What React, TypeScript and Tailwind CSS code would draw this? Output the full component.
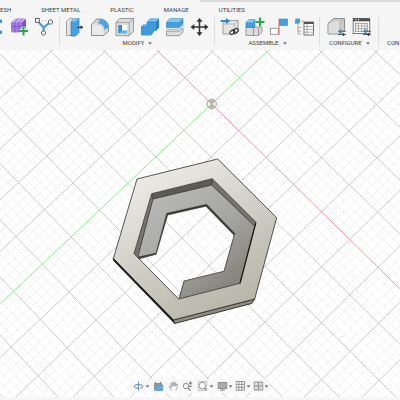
import * as React from "react";
import { clsx } from "clsx";

type IconProps = { className?: string };

type Tool = {
  label: string;
  icon: React.ReactNode;
};

type ToolGroup = {
  name: string;
  title?: string;
  className: string;
  tools: Tool[];
};

const TABS = ["ESH", "SHEET METAL", "PLASTIC", "MANAGE", "UTILITIES"];

function ToolIcon({ children }: { children: React.ReactNode }) {
  return (
    <svg viewBox="0 0 20 20" className="size-5" fill="none" aria-hidden>
      {children}
    </svg>
  );
}

function Caret({ className }: IconProps) {
  return (
    <svg viewBox="0 0 4 3" className={clsx("h-[3px] w-1 shrink-0", className)} aria-hidden>
      <path d="M0 0.3h4L2 2.7z" fill="#777" />
    </svg>
  );
}

const GROUPS: ToolGroup[] = [
  {
    name: "Create",
    className: "-ml-4 pr-[5px]",
    tools: [
      {
        label: "Pattern",
        icon: (
          <ToolIcon>
            <path d="M12 2.500h6V6h-5zM12 13.500h6V17h-6z" fill="#3f9ad8" />
          </ToolIcon>
        ),
      },
      {
        label: "Create form",
        icon: (
          <ToolIcon>
            <path d="M2 6q0-1 1-1.6L6 2q1-.6 2-.6h7q2 0 2 2v7q0 1-1 2l-2 2q-1 1-2 1H4q-2 0-2-2z" fill="#a47be2" />
            <path d="M2.5 5.2 6 2h10l-3 3.4z" fill="#c9adf4" />
            <path d="M13.3 5.5 17 2.4v8l-3.7 4z" fill="#7f54c4" />
            <path d="M2 9.5h11.3L17 6M6 5.3V15M9.8 5.3V15M13.3 5.4V15M6 5l3-3M10 5l3-3" stroke="#7850ba" strokeWidth="0.7" />
            <path d="M14.5 9.5v9M10 14h9" stroke="#f5f5f6" strokeWidth="3.6" />
            <path d="M14.5 9.5v9M10 14h9" stroke="#29a84a" strokeWidth="2" />
          </ToolIcon>
        ),
      },
      {
        label: "Derive",
        icon: (
          <ToolIcon>
            <path d="M4 4.5 9.5 10.5 16.5 5M9.5 10.5v5" stroke="#489dd7" strokeWidth="2.2" />
            <path d="M5 3.800h9" stroke="#999" strokeWidth="0.7" strokeDasharray="1 2" />
            <rect x="1.5" y="1.500" width="3.8" height="3.8" fill="#fff" stroke="#666" />
            <circle cx="16.5" cy="5" r="2.2" fill="#fff" stroke="#666" />
            <circle cx="9.5" cy="16" r="2.100" fill="#fff" stroke="#666" />
          </ToolIcon>
        ),
      },
    ],
  },
  {
    name: "Modify",
    title: "MODIFY",
    className: "pr-1 pl-[5px]",
    tools: [
      {
        label: "Press pull",
        icon: (
          <ToolIcon>
            <path d="M1.5 4.5 4.5 1.5H8v17H1.5z" fill="#e4e4e4" stroke="#8a8a8a" strokeWidth="0.8" />
            <path d="M6 4.5 9.5 1.5h4.5v14L10.5 19H6z" fill="#4a9fdb" stroke="#2f83c0" strokeWidth="0.7" />
            <path d="M6 4.5 9.5 1.5H14l-3.5 3z" fill="#8fc8f0" />
            <path d="M12.5 10.3h4" stroke="#333" strokeWidth="1.2" />
            <path d="m15.5 8.300 3 2-3 2z" fill="#333" />
          </ToolIcon>
        ),
      },
      {
        label: "Fillet",
        icon: (
          <ToolIcon>
            <path d="M1.5 7.5 6.5 2h3.5c5 0 8.5 4 8.5 8v4l-4.5 4.5H1.5z" fill="#d6d6d6" stroke="#777" strokeWidth="0.8" />
            <path d="M2 7.8h4c4.5 0 7.5 3 7.5 7V18H2z" fill="#ececec" />
            <path d="M8 6.500 10 2c5 0 8.5 3.5 8.5 8.500l-4 2.500c0-4-2.500-6.500-6.500-6.500z" fill="#4fa3dd" />
          </ToolIcon>
        ),
      },
      {
        label: "Shell",
        icon: (
          <ToolIcon>
            <path d="M1 5.5 4.8 1.5h13.7v13l-4.2 4.2H1z" fill="#dcdcdc" stroke="#888" strokeWidth="0.8" />
            <path d="M1 5.5h13.3v13.2M14.3 5.5l4.2-4" stroke="#999" strokeWidth="0.8" />
            <path d="M3.500 8h8.500v8.500H3.500z" fill="#6ab2e4" />
            <path d="M3.500 8H7v5.300l-3.500 3.200z" fill="#2f8bcd" />
            <path d="M7 8h5v5.300H7z" fill="#fff" />
          </ToolIcon>
        ),
      },
      {
        label: "Combine",
        icon: (
          <ToolIcon>
            <path d="M7 5 10 1.5h9v9L15.5 14H14v1l-3 3.5H1v-9L4 7h3z" fill="#4099d9" />
            <path d="M7 5 10 1.5h9L16 5zM1 9.5 4 7h3v2.5z" fill="#7cbdec" />
            <path d="M16 5 19 1.5v9L16 14z" fill="#2a81c4" />
            <path d="M1 9.5h6V5h9" stroke="#2c84c6" strokeWidth="0.6" />
          </ToolIcon>
        ),
      },
      {
        label: "Split body",
        icon: (
          <ToolIcon>
            <path d="M1.5 5 5 1.5h13v5.5l-4 3.5H1.5z" fill="#479dda" stroke="#2f83c0" strokeWidth="0.6" />
            <path d="M1.5 5 5 1.5h13L14 5z" fill="#8ac5ee" />
            <path d="M1 12.3h13l5-4.300" stroke="#6cb0e0" strokeWidth="0.900" />
            <path d="M1.5 14.2H14l4-3.2v4l-3.5 3.7h-13z" fill="#dcdcdc" stroke="#888" strokeWidth="0.8" />
          </ToolIcon>
        ),
      },
      {
        label: "Move",
        icon: (
          <ToolIcon>
            <path d="M9.500 3v14M2.500 10h14" stroke="#333" strokeWidth="1.500" />
            <path d="m9.500 1 3 3.800h-6zM9.500 19l3-3.800h-6zM.5 10l3.800-3v6zM18.500 10l-3.800-3v6z" fill="#333" />
          </ToolIcon>
        ),
      },
    ],
  },
  {
    name: "Assemble",
    title: "ASSEMBLE",
    className: "pr-1 pl-[5px]",
    tools: [
      {
        label: "Insert component",
        icon: (
          <ToolIcon>
            <path d="M3 6.5 6 3.5h12v11l-2 2.5H3z" fill="#e6e6e6" stroke="#888" strokeWidth="0.8" />
            <path d="M14.5 7V16M3 7h11.5L18 3.5" stroke="#aaa" strokeWidth="0.7" />
            <path d="M.7 4h6" stroke="#2788ce" strokeWidth="2" />
            <path d="m6 1 4.2 3L6 7z" fill="#2788ce" />
            <rect x="9.5" y="13.500" width="5.4" height="3.6" rx="1.8" transform="rotate(-35 12 15)" fill="#f5f5f6" stroke="#333" strokeWidth="1.2" />
            <rect x="13.3" y="12" width="5.4" height="3.6" rx="1.8" transform="rotate(-35 16 14)" stroke="#333" strokeWidth="1.2" />
          </ToolIcon>
        ),
      },
      {
        label: "New component",
        icon: (
          <ToolIcon>
            <path d="M1 10h16v5l-3.500 3.500H1z" fill="#dcdcdc" stroke="#888" strokeWidth="0.8" />
            <path d="M1 5.500 4 2.500h6v8H1z" fill="#479dda" stroke="#2980c0" strokeWidth="0.6" />
            <path d="M1 5.500 4 2.500h6l-2 3z" fill="#8bc5ef" />
            <path d="M8.5 10.5v8M13.5 11v7" stroke="#888" strokeWidth="0.8" />
            <path d="M15 .5v9M10.5 5h9" stroke="#f5f5f6" strokeWidth="3.600" />
            <path d="M15 .5v9M10.5 5h9" stroke="#29a84a" strokeWidth="2" />
          </ToolIcon>
        ),
      },
      {
        label: "Joint",
        icon: (
          <ToolIcon>
            <rect x=".5" y="11.3" width="8" height="6" fill="#fff" stroke="#888" strokeWidth="0.8" />
            <rect x="9.500" y="2" width="8" height="6.500" fill="#4a9fdb" stroke="#3487c4" strokeWidth="0.6" />
            <path d="M9 2v16" stroke="#e0605c" strokeWidth="1" />
          </ToolIcon>
        ),
      },
      {
        label: "Bill of materials",
        icon: (
          <ToolIcon>
            <path d="M0 2.500 1 1.500h4v4L4 6.700H0z" fill="#4a9fdb" />
            <path d="M3 7v10h3M3 10.5h3M3 14h3M6 4h3" stroke="#888" strokeWidth="0.7" />
            <rect x="9" y="5" width="9.5" height="13" fill="#fff" stroke="#666" strokeWidth="0.9" />
            <path d="M9 6h9.5" stroke="#555" strokeWidth="2" />
            <path d="M9 9.5h9.500M9 12.3h9.500M9 15.2h9.500M12 7v11" stroke="#999" strokeWidth="0.8" />
          </ToolIcon>
        ),
      },
    ],
  },
  {
    name: "Configure",
    title: "CONFIGURE",
    className: "pr-1.5 pl-[7px]",
    tools: [
      {
        label: "Configure model",
        icon: (
          <ToolIcon>
            <path d="M1 6.5 6.500 1.500h11V13l-4 4H1z" fill="#c9c9c9" stroke="#777" strokeWidth="0.8" />
            <path d="M1.500 7 5.500 4.500H13v12H1.500z" fill="#dedede" />
            <path d="M13 5V17M13 5l4.500-3.500" stroke="#aaa" strokeWidth="0.7" />
            <path d="M11 14.300h8M11 17.500h8" stroke="#555" />
            <path d="M13.500 12.300v4" stroke="#2f8fd3" strokeWidth="2" />
            <path d="M16.500 16v3" stroke="#444" strokeWidth="1.4" />
          </ToolIcon>
        ),
      },
      {
        label: "Configuration table",
        icon: (
          <ToolIcon>
            <rect x="1.2" y="1.5" width="16.5" height="15" fill="#fff" stroke="#666" strokeWidth="0.9" />
            <path d="M1 2.800h17" stroke="#505050" strokeWidth="3" />
            <path d="M3.5 2.7h1.2M6 2.7h1.2" stroke="#fff" />
            <rect x="3.3" y="6.3" width="12" height="8" stroke="#888" strokeWidth="0.8" />
            <path d="M3 9h12.5M3 11.7h12.5M6.5 6v8.5M9.7 6v8.5M12.7 6v8.5" stroke="#999" strokeWidth="0.8" />
            <path d="M11 14.300h8M11 17.500h8" stroke="#555" />
            <path d="M13.500 12.300v4" stroke="#2f8fd3" strokeWidth="2" />
            <path d="M16.500 16v3" stroke="#444" strokeWidth="1.4" />
          </ToolIcon>
        ),
      },
    ],
  },
];

function NavIcon({ children }: { children: React.ReactNode }) {
  return (
    <svg viewBox="0 0 10 10" className="size-[10px]" fill="none" stroke="#888" strokeWidth="0.9" aria-hidden>
      {children}
    </svg>
  );
}

const NAV_TOOLS: (Tool & { menu?: boolean; className: string })[] = [
  {
    label: "Orbit",
    menu: true,
    className: "mr-1 gap-[2px]",
    icon: (
      <NavIcon>
        <path d="M3.5 7.2C-.8 6.5-.3 3.6 5 3.6s5.800 2.900 1.500 3.600" stroke="#666" />
        <path d="m5.500 5.600-2 1.600 2 1.500z" fill="#555" stroke="none" />
        <path d="M5 .3v9.400" stroke="#4f9fd8" />
      </NavIcon>
    ),
  },
  {
    label: "Look at",
    className: "mr-[5px]",
    icon: (
      <NavIcon>
        <path d="M.8 2.500h7.400v6.700H.8z" fill="#999" />
        <path d="M2.800 4.300h6.400v5H2.800z" fill="#62ace2" stroke="#5c98c4" />
        <path d="M2 2V.8M7 2V.8" stroke="#777" />
      </NavIcon>
    ),
  },
  {
    label: "Pan",
    className: "mr-1",
    icon: (
      <NavIcon>
        <path
          d="M3.200 9.500.7 5.700q.7-.8 1.500.2l.8.700-.9-4.200q.7-.6 1.100.3l.9 2.500L4 1.200q.7-.7 1.100.1l.3 3.600.9-3.300q.8-.5 1 .4l-.5 3.500L8.300 3q.8-.3.900.5L8 7.500l-.8 2"
          fill="#fff"
          strokeWidth="0.7"
        />
      </NavIcon>
    ),
  },
  {
    label: "Zoom",
    className: "mr-[5px]",
    icon: (
      <NavIcon>
        <circle cx="3.500" cy="5" r="2.700" fill="#fff" />
        <path d="m5.500 7 2.700 2.700" strokeWidth="1.400" />
        <path d="M8 .5v3.300M6.400 2.100h3.300M6.400 5.300h3.300" stroke="#666" />
      </NavIcon>
    ),
  },
  {
    label: "Fit",
    menu: true,
    className: "mr-1 gap-[2px]",
    icon: (
      <NavIcon>
        <path d="M.5 .5h9v9h-9z" fill="#eee" stroke="#aaa" strokeWidth="0.600" />
        <circle cx="4.800" cy="4.600" r="3.300" fill="#fff" />
        <path d="m7 7 2.200 2.400" strokeWidth="1.400" />
      </NavIcon>
    ),
  },
  {
    label: "Display settings",
    menu: true,
    className: "mr-[3px] gap-px",
    icon: (
      <NavIcon>
        <rect x=".5" y="1.500" width="9" height="6" fill="#aaa" />
        <path d="M5 7.500v1.700M2.500 9.200h5" />
      </NavIcon>
    ),
  },
  {
    label: "Grid and snaps",
    menu: true,
    className: "mr-[3px] gap-px",
    icon: (
      <NavIcon>
        <path d="M.5.5h8.600v8.600H.5zM3.400.5v8.600M6.300.5v8.600M.5 3.400h8.600M.5 6.300h8.600" fill="#fff" />
      </NavIcon>
    ),
  },
  {
    label: "Viewports",
    menu: true,
    className: "gap-px",
    icon: (
      <NavIcon>
        <path d="M.5 1h9v8h-9z" fill="#ddd" />
        <path d="M5 1v8M.5 5h9" />
      </NavIcon>
    ),
  },
];

// Ground plane: grid cell (i, j) projected into the view. i runs along the
// red axis, j along the green one.
function project(i: number, j: number) {
  const w = 1 - 0.005 * i - 0.003 * j;
  return {
    x: 211.7 + (26.9 * i - 27.7 * j) / w,
    y: 104 + (26.4 * i + 26.2 * j) / w,
  };
}

function gridPath(step: number, skip?: number) {
  const parts: string[] = [];
  const range = 16 / step;
  for (let n = -range; n <= range; n++) {
    if (n === 0 || (skip && n % skip === 0)) continue;
    const k = n * step;
    const lines = [
      [project(k, -18), project(k, 18)],
      [project(-18, k), project(18, k)],
    ];
    for (const [a, b] of lines) {
      parts.push(`M${a.x.toFixed(1)} ${a.y.toFixed(1)}L${b.x.toFixed(1)} ${b.y.toFixed(1)}`);
    }
  }
  return parts.join("");
}

const MAJOR_GRID = gridPath(1);
const MINOR_GRID = gridPath(0.2, 5);

function axisPoints(along: "i" | "j") {
  const a = along === "i" ? project(-18, 0) : project(0, -18);
  const b = along === "i" ? project(18, 0) : project(0, 18);
  return { x1: a.x, y1: a.y, x2: b.x, y2: b.y };
}

function HexModel() {
  return (
    <g strokeLinejoin="round">
      {/* outside walls */}
      <path d="M113.300 258.700 173.300 320l1.400 3.500L114 261z" fill="#2b2a26" stroke="#1d1d1b" strokeWidth="0.8" />
      <path d="M173.300 320 254.700 299l-3 4.500-77 20z" fill="#8e8b80" stroke="#2b2a26" strokeWidth="0.9" />
      {/* inner ledge */}
      <path
        d="M153 199 211.700 185l43.600 41.700L240 283.300 178.700 299l5.300-18 40-9.700 10.700-38-28-29-40 9L156 253.300l-18.300 4z"
        fill="url(#ledge)"
      />
      {/* pocket walls */}
      <path d="m151.700 193.700 60.600-15-.6 6.300L153 199z" fill="#5d5b55" />
      <path d="m212.300 178.700 43.700 43.600-.7 4.400L211.700 185z" fill="#77726a" />
      <path d="m151.700 193.700 1.300 5.300-15.300 58.300-3.700-3.600z" fill="#77746d" />
      <path
        d="M153 199 211.700 185l43.600 41.700M153 199l-15.300 58.300M151.700 193.700l1.300 5.300M212.300 178.700l-.6 6.300"
        stroke="#33312d"
        strokeWidth="0.8"
        fill="none"
      />
      {/* through hole */}
      <path
        d="m166.700 213.300 40-9 28 29-.7 1.700-28-28.800-38.300 8.800-11.400 38.800L156 253.300z"
        fill="#3a3936"
        stroke="#292826"
        strokeWidth="0.500"
      />
      <path d="M156 253.300v.9L139 258.700l-1.300-1.400z" fill="#55534e" stroke="#292826" strokeWidth="0.8" />
      <path d="m234.700 233.300-10.700 38-40 9.700-5 18" stroke="#3a3935" strokeWidth="0.8" fill="none" />
      {/* top face */}
      <path
        fillRule="evenodd"
        d="M137 179 217.700 159l59 58.700-22 81.300-81.400 21-60-61.300zM151.700 193.700 134 253.700l44.700 45.300L240 283.300l16-61-43.700-43.600z"
        fill="url(#face)"
        stroke="#2d2c29"
        strokeWidth="0.8"
      />
      <path d="m255.700 223-15.700 60.300" stroke="#1d1c1a" strokeWidth="1.200" />
      <path d="m113.300 259 60.500 62" stroke="#161614" strokeWidth="1.300" />
    </g>
  );
}

function Viewport() {
  return (
    <svg
      viewBox="0 50 400 347"
      preserveAspectRatio="xMidYMid slice"
      className="absolute inset-0 size-full"
      role="img"
      aria-label="Hexagonal part on the ground plane"
    >
      <defs>
        <linearGradient id="face" gradientUnits="userSpaceOnUse" x1="150" y1="170" x2="225" y2="310">
          <stop offset="0" stopColor="#ecebe7" />
          <stop offset="0.45" stopColor="#d3d1c9" />
          <stop offset="1" stopColor="#b9b6aa" />
        </linearGradient>
        <linearGradient id="ledge" gradientUnits="userSpaceOnUse" x1="160" y1="200" x2="230" y2="290">
          <stop offset="0" stopColor="#b6b6b4" />
          <stop offset="0.500" stopColor="#a5a5a2" />
          <stop offset="1" stopColor="#85837a" />
        </linearGradient>
      </defs>
      <path d={MINOR_GRID} stroke="#e4e4e7" strokeWidth="0.700" strokeDasharray="3 1" />
      <path d={MAJOR_GRID} stroke="#cacacd" strokeWidth="1" />
      <line {...axisPoints("i")} stroke="#f3929f" strokeWidth="1" />
      <line {...axisPoints("j")} stroke="#84ec84" strokeWidth="1" />
      <circle cx="211.700" cy="104" r="5.400" fill="#b9b9b5" />
      <path d="m211.700 104-3.800-2.200v4.400zM211.700 104l3.800-2.200v4.400z" fill="#fff" />
      <path d="m209.500 101.800 4.400 4.400" stroke="#d98a6c" strokeWidth="0.900" />
      <path d="m209.500 106.200 4.400-4.400" stroke="#9bb65e" strokeWidth="0.900" />
      <HexModel />
    </svg>
  );
}

function Toolbar() {
  return (
    <div className="flex h-[33px] items-start overflow-hidden">
      {GROUPS.map((group) => (
        <section
          key={group.name}
          aria-label={group.name}
          className={clsx("flex h-[29px] shrink-0 flex-col items-center border-r border-[#dcdcde]", group.className)}
        >
          <div className="flex gap-[5px]">
            {group.tools.map((tool) => (
              <button key={tool.label} type="button" aria-label={tool.label} className="size-5 shrink-0">
                {tool.icon}
              </button>
            ))}
          </div>
          {group.title ? (
            <button type="button" className="mt-[2px] flex items-center gap-1 leading-[8px]">
              {group.title}
              <Caret />
            </button>
          ) : null}
        </section>
      ))}
      <section aria-label="Construct" className="shrink-0 pt-[22px] pl-2">
        <button type="button" className="block leading-[8px]">
          CON
        </button>
      </section>
    </div>
  );
}

export default function App() {
  return (
    <div className="flex min-h-screen flex-col overflow-hidden bg-white font-[Roboto,'Liberation_Sans',sans-serif] text-[6px] text-[#3c3c3c]">
      <header className="shrink-0 bg-[#f5f5f6]">
        <div className="ml-[50%] h-[2px] bg-[#dadadb]" />
        <nav className="flex h-[15px] items-center gap-[30px] leading-[8px]">
          {TABS.map((tab) => (
            <button key={tab} type="button" className="shrink-0 whitespace-nowrap">
              {tab}
            </button>
          ))}
        </nav>
        <Toolbar />
      </header>

      <main className="relative flex-1 overflow-hidden">
        <Viewport />
        <div className="absolute bottom-1 left-1/2 flex h-[14px] -translate-x-1/2 items-center bg-[#f8f8f8] pr-px pl-[3px]">
          {NAV_TOOLS.map((tool) => (
            <button
              key={tool.label}
              type="button"
              aria-label={tool.label}
              className={clsx("flex shrink-0 items-center", tool.className)}
            >
              {tool.icon}
              {tool.menu ? <Caret /> : null}
            </button>
          ))}
        </div>
      </main>

      <footer className="h-[3px] shrink-0 bg-[#f6f6f7]" />
    </div>
  );
}
